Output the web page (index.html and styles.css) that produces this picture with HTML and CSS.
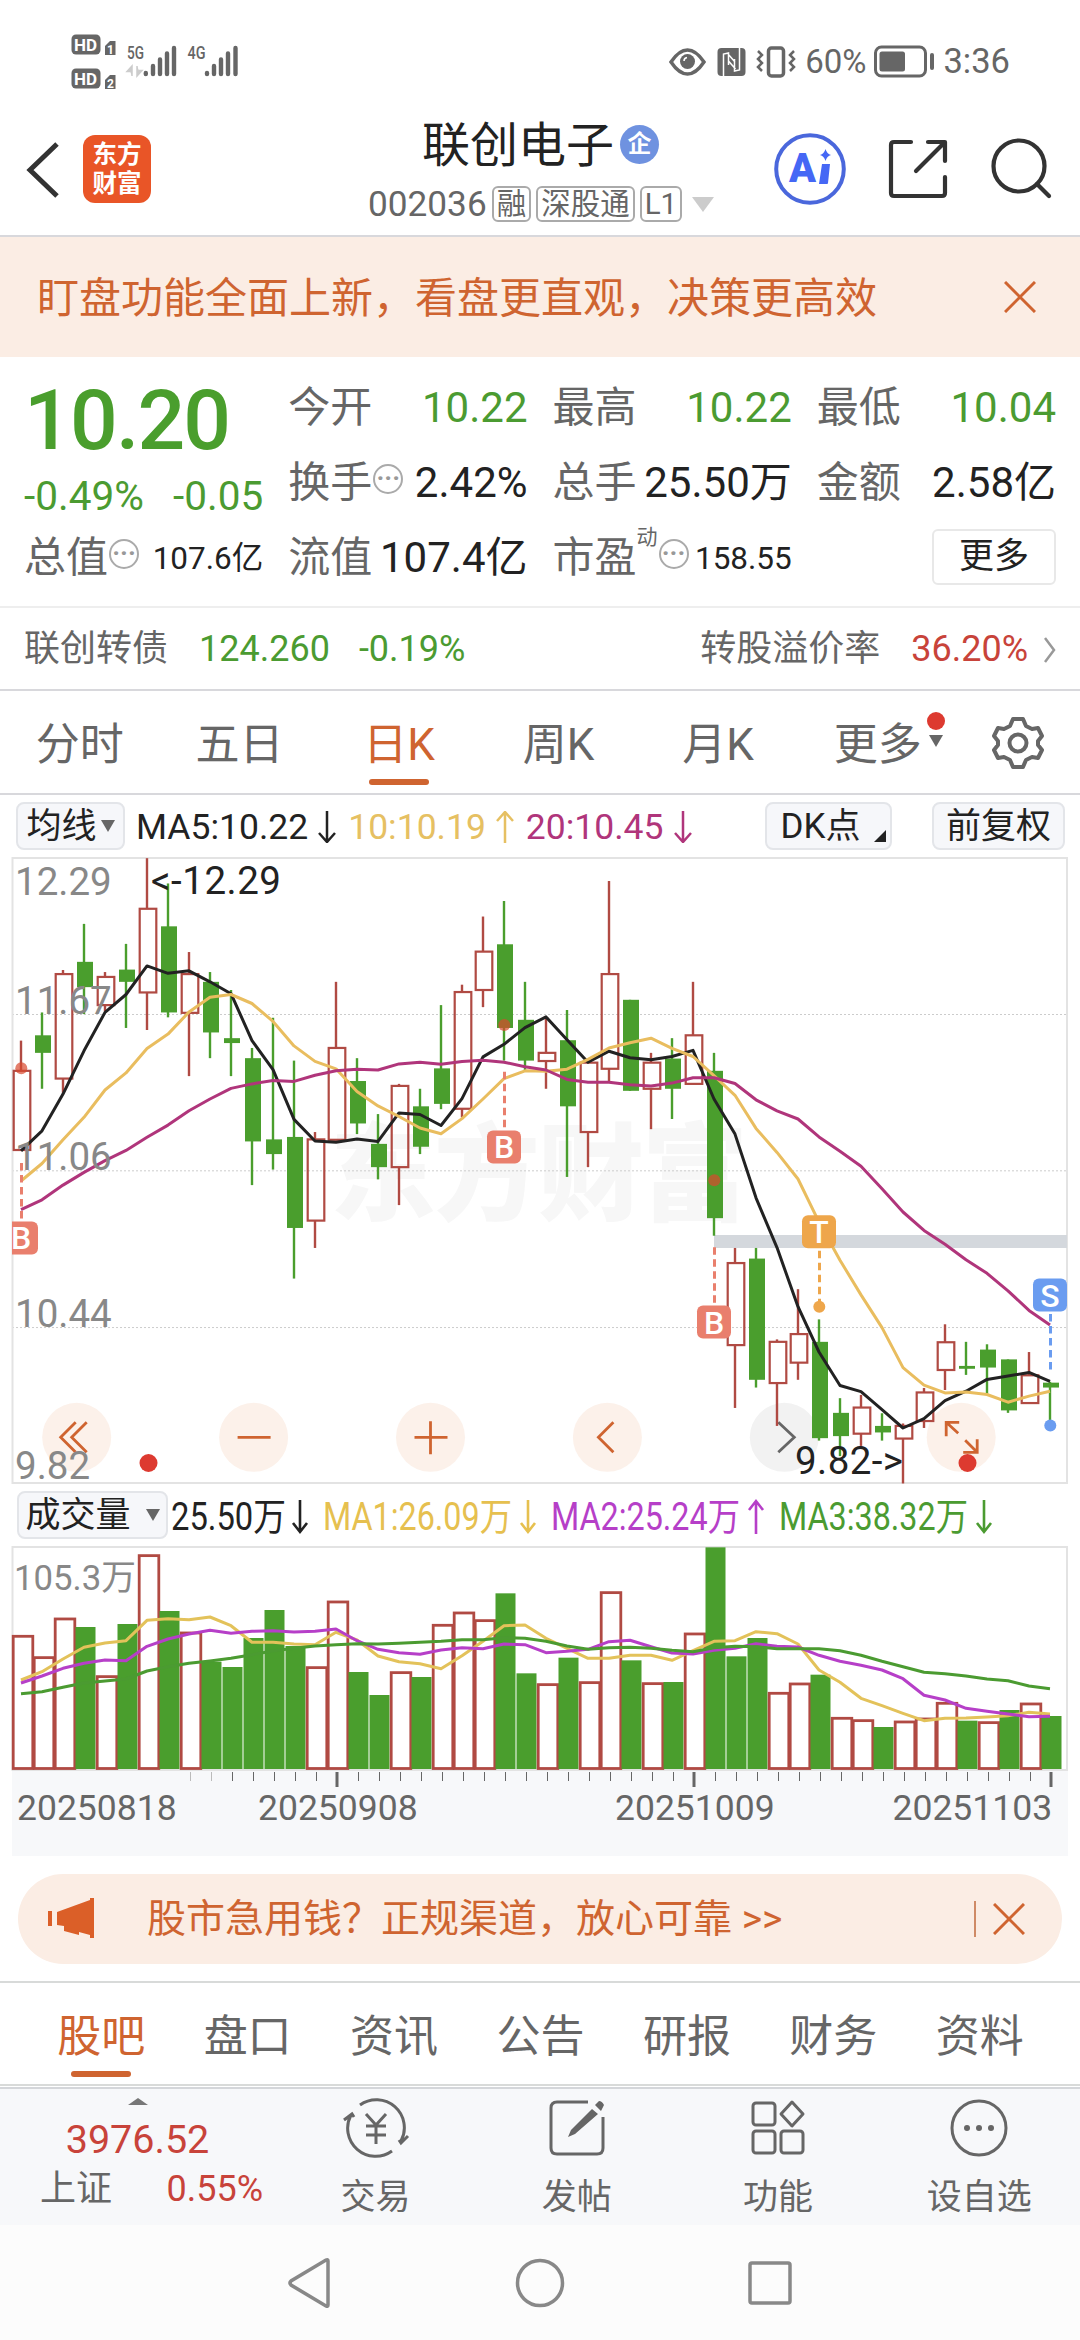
FILE: index.html
```html
<!DOCTYPE html>
<html lang="zh-CN">
<head>
<meta charset="utf-8">
<title>联创电子 002036</title>
<link rel="stylesheet" href="styles.css">
</head>
<body>

<div id="status">
	<svg class="left" width="200" height="60" viewBox="60 30 200 60">
		<g fill="#666">
			<rect x="71.500" y="34.500" width="29" height="20" rx="4.500"/>
			<path d="M105 46l5-5h5.500v14H105z"/>
			<rect x="71.500" y="68.500" width="29" height="20" rx="4.500"/>
			<path d="M105 80l5-5h5.500v14H105z"/>
		</g>
		<g stroke="#666" stroke-width="4.400" stroke-linecap="round">
			<path d="M145.800 73v1M153 66v8M160 59.500V74M167 53.500V74M174 48V74"/>
			<path d="M207 73v1M214 66v8M221 59.500V74M228 53.500V74M235.500 48V74"/>
		</g>
		<path d="M132 76V66l-5 5.500h3M137 66v10l5-5.500h-3" fill="#ccc" stroke="#ccc" stroke-width="1.500"/>
		<g class="hd">
			<text x="74" y="51">HD</text><text x="107" y="53.500" class="sub">1</text>
			<text x="74" y="85">HD</text><text x="107" y="87.500" class="sub">2</text>
		</g>
		<g class="net"><text x="127" y="59" textLength="17" lengthAdjust="spacingAndGlyphs">5G</text><text x="187.500" y="59" textLength="18" lengthAdjust="spacingAndGlyphs">4G</text></g>
	</svg>
	<div class="right">
		<svg width="136" height="40" viewBox="664 41 136 40" fill="none" stroke="#666">
			<path d="M671 61q8-12 16.500-12T704 61q-8 12-16.500 12T671 61z" stroke-width="3.500"/>
			<circle cx="687.500" cy="60.500" r="7.500" fill="#666" stroke="none"/>
			<path d="M684 60q0-3 3-3.500" stroke="#fff" stroke-width="1.500"/>
			<rect x="717.500" y="47" width="28" height="28" rx="4" fill="#666" stroke="none"/>
			<path d="M723.500 76V53l5-1v12M728 53l7 8M739.500 46v23l-5 1V58M735.500 68l-7-8" stroke="#fff" stroke-width="1.500"/>
			<rect x="768.500" y="47" width="15" height="28" rx="3" stroke-width="3.500"/>
			<path d="M758 50l4 4-4 4 4 4-4 4 4 4M794 50l-4 4 4 4-4 4 4 4-4 4" stroke-width="2.500"/>
		</svg>
		<span>60%</span>
		<svg width="62" height="34" viewBox="873 45 62 34">
			<rect x="875.500" y="47" width="50" height="29" rx="6" fill="none" stroke="#666" stroke-width="3"/>
			<rect x="879.500" y="51.500" width="25.500" height="20" rx="2.500" fill="#666"/>
			<rect x="930" y="53" width="4" height="17" rx="2" fill="#666"/>
		</svg>
		<span class="time">3:36</span>
	</div>
</div>

<div id="header">
	<svg class="back" width="36" height="60" viewBox="0 0 36 60" fill="none" stroke="#333" stroke-width="5"><path d="M32 4L5 30l27 26"/></svg>
	<div class="logo">东方<br>财富</div>
	<div class="title">
		<div class="name">联创电子<span class="qi">企</span></div>
		<div class="code">002036<span class="tag">融</span><span class="tag">深股通</span><span class="tag">L1</span><i></i></div>
	</div>
	<div class="tools">
		<svg width="74" height="74" viewBox="-37 -37 74 74">
			<circle r="33.800" fill="none" stroke="#4a67dc" stroke-width="4"/>
			<g class="ai"><text x="-21" y="13" textLength="27" lengthAdjust="spacingAndGlyphs">A</text><path d="M12-5h8l-2 19q0 1-1 1H9z" stroke-linejoin="round"/><path d="M15.500-20q1.500 5 5.500 6-4 1-5.500 6-1.500-5-5.500-6 4-1 5.500-6z"/></g>
		</svg>
		<svg width="62" height="62" viewBox="0 0 62 62" fill="none" stroke="#333" stroke-width="4.200" stroke-linecap="round" stroke-linejoin="round">
			<path d="M24 4H7q-3 0-3 3v48q0 3 3 3h48q3 0 3-3V39M41 4h17v19M56 6L29 33"/>
		</svg>
		<svg width="62" height="62" viewBox="0 0 62 62" fill="none" stroke="#333" stroke-width="4.200" stroke-linecap="round">
			<circle cx="29" cy="28" r="25.500"/><path d="M47 46l12 12"/>
		</svg>
	</div>
</div>

<div id="notice">
	<span>盯盘功能全面上新，看盘更直观，决策更高效</span>
	<svg class="close" width="32" height="32" viewBox="0 0 32 32"><path d="M1 1l30 30M31 1L1 31"/></svg>
</div>

<div id="quote">
	<div class="price">
		<b>10.20</b>
		<div><span>-0.49%</span><span>-0.05</span></div>
	</div>
	<div class="cell"><label>今开</label><em class="green">10.22</em></div>
	<div class="cell"><label>最高</label><em class="green">10.22</em></div>
	<div class="cell"><label>最低</label><em class="green">10.04</em></div>
	<div class="cell"><label>换手<i class="dots">···</i></label><em>2.42%</em></div>
	<div class="cell"><label>总手</label><em>25.50万</em></div>
	<div class="cell"><label>金额</label><em>2.58亿</em></div>
	<div class="cell"><label>总值<i class="dots">···</i></label><em class="small">107.6亿</em></div>
	<div class="cell"><label>流值</label><em>107.4亿</em></div>
	<div class="cell"><label>市盈<sup>动</sup><i class="dots">···</i></label><em class="small">158.55</em></div>
	<div class="cell"><button>更多</button></div>
</div>

<div id="bond">
	<span>联创转债</span><span class="green v1">124.260</span><span class="green v2">-0.19%</span>
	<span class="rate">转股溢价率</span><span class="red v3">36.20%</span>
	<svg width="12" height="26" viewBox="0 0 12 26" fill="none" stroke="#999" stroke-width="2.500"><path d="M1 1l9 12-9 12"/></svg>
</div>

<div id="period">
	<span>分时</span>
	<span>五日</span>
	<span class="on">日K</span>
	<span>周K</span>
	<span>月K</span>
	<span class="more">更多<i></i></span>
	<svg width="54" height="54" viewBox="-27 -27 54 54" fill="none" stroke="#666" stroke-width="4" stroke-linejoin="round">
		<path d="M-5-24H5L8-17 14-14 20-15 24-7 20-2V2L24 7 20 15 14 14 8 17 5 24H-5L-8 17-14 14-20 15-24 7-20 2V-2L-24-7-20-15-14-14-8-17z"/>
		<circle r="8.500"/>
	</svg>
</div>

<div id="ma">
	<span class="btn avg">均线<i class="down"></i></span>
	<span class="m5">MA5:10.22</span><svg class="arr" viewBox="0 0 18 32"><path d="M9 0v31M1 22l8 9 8-9"/></svg>
	<span class="m10">10:10.19</span><svg class="arr m10" viewBox="0 0 18 32"><path d="M9 32V1M1 10l8-9 8 9"/></svg>
	<span class="m20">20:10.45</span><svg class="arr m20" viewBox="0 0 18 32"><path d="M9 0v31M1 22l8 9 8-9"/></svg>
	<span class="btn dk">DK点<i></i></span>
	<span class="btn fq">前复权</span>
</div>

<svg id="kline" width="1080" height="627" viewBox="0 7 1080 627"></svg>

<div id="vma">
	<span class="btn">成交量<i class="down"></i></span>
	<svg width="860" height="60" viewBox="170 1485 860 60">
		<g class="vtext">
			<text x="171" y="1529.500" textLength="115" lengthAdjust="spacingAndGlyphs" fill="#222">25.50万</text>
			<text x="323" y="1529.500" textLength="189" lengthAdjust="spacingAndGlyphs" fill="#e6c04f">MA1:26.09万</text>
			<text x="551" y="1529.500" textLength="189" lengthAdjust="spacingAndGlyphs" fill="#b63fc8">MA2:25.24万</text>
			<text x="779" y="1529.500" textLength="189" lengthAdjust="spacingAndGlyphs" fill="#4b9b31">MA3:38.32万</text>
		</g>
		<g fill="none" stroke-width="2.600">
			<path d="M300 1500v32M293 1523l7 9 7-9" stroke="#222"/>
			<path d="M528 1500v32M521 1523l7 9 7-9" stroke="#e6c04f"/>
			<path d="M756 1534v-32M749 1510l7-9 7 9" stroke="#b63fc8"/>
			<path d="M984 1500v32M977 1523l7 9 7-9" stroke="#4b9b31"/>
		</g>
	</svg>
</div>

<svg id="volume" width="1080" height="310" viewBox="0 66 1080 310"></svg>

<div id="ad">
	<svg width="48" height="42" viewBox="0 0 48 42" fill="#db5f28"><rect x="0" y="13" width="4" height="15"/><path d="M9 14L42 2V0h4v40h-4v-3l-11-3v3l-15-4v-5l-7-1z"/></svg>
	<span>股市急用钱？正规渠道，放心可靠 &gt;&gt;</span>
	<i></i>
	<svg class="close" width="32" height="32" viewBox="0 0 32 32"><path d="M1 1l30 30M31 1L1 31"/></svg>
</div>

<div id="tabs">
	<span class="on">股吧</span>
	<span>盘口</span>
	<span>资讯</span>
	<span>公告</span>
	<span>研报</span>
	<span>财务</span>
	<span>资料</span>
</div>

<div id="bottom">
	<div class="index">
		<i></i>
		<b>3976.52</b>
		<div><span>上证</span><span class="red">0.55%</span></div>
	</div>
	<div class="item">
		<svg width="68" height="60" viewBox="-34 -30 68 60">
			<path d="M-16-23A28 28 0 0 1 25 13M16 23A28 28 0 0 1-25-13M-32-8l8-6 2 3M32 8l-7 7-2-3"/>
			<path d="M-10-14L0-3l10-11M0-3v19M-10-2h20M-10 7h20"/>
		</svg>
		<span>交易</span>
	</div>
	<div class="item">
		<svg width="60" height="60" viewBox="-30 -30 60 60">
			<path d="M11-26h-31q-6 0-6 6v40q0 6 6 6h40q6 0 6-6v-31"/>
			<path d="M15-19l6 5L-2 6-9 9l3-7zM18-23l4-4q3 0 5 4l-3 6z" fill="#666" stroke="none"/>
		</svg>
		<span>发帖</span>
	</div>
	<div class="item">
		<svg width="60" height="60" viewBox="-30 -30 60 60">
			<rect x="-25" y="-25" width="22" height="22" rx="3"/><path d="M14-26l11 12-11 12L3-14z" stroke-linejoin="round"/>
			<rect x="-25" y="3" width="22" height="22" rx="3"/><rect x="3" y="3" width="22" height="22" rx="3"/>
		</svg>
		<span>功能</span>
	</div>
	<div class="item">
		<svg width="60" height="60" viewBox="-30 -30 60 60">
			<circle r="27"/>
			<g fill="#666" stroke="none"><circle cx="-12" r="3"/><circle r="3"/><circle cx="12" r="3"/></g>
		</svg>
		<span>设自选</span>
	</div>
</div>

<div id="nav">
	<svg width="46" height="52" viewBox="0 0 46 52"><path d="M41 4v44q0 2-2 1L4 28q-2-2 0-4L39 3q2-1 2 1z"/></svg>
	<svg width="52" height="52" viewBox="0 0 52 52"><circle cx="26" cy="26" r="22.500"/></svg>
	<svg width="48" height="48" viewBox="0 0 48 48"><rect x="4" y="4" width="40" height="40" rx="2"/></svg>
</div>

<script src="chart.js"></script>
</body>
</html>
```
FILE: styles.css
```css
* {
	box-sizing: border-box;
}
body {
	margin: 0;
	width: 1080px;
	background: #fff;
	color: #222;
	font-family: Roboto, "Noto Sans CJK SC", sans-serif;
	font-size: 35px;
	line-height: 1.2;
}
svg {
	display: block;
	flex: none;
}
span, label, em, b {
	white-space: nowrap;
}
i, em {
	font-style: normal;
}
.green {color: #4b9b31 !important;}
.red {color: #c8433a;}

/* 状态栏 */
#status {
	height: 124px;
	padding: 30px 70px 0 60px;
	display: flex;
	justify-content: space-between;
}
#status .hd text {
	font-size: 17px;
	font-weight: bold;
	fill: #fff;
}
#status .hd .sub {font-size: 12px;}
#status .net text {
	font-size: 19px;
	font-weight: 500;
	fill: #666;
}
#status .right {
	display: flex;
	align-items: center;
	height: 64px;
	color: #666;
	font-size: 33px;
}
#status .right span {margin: 0 7px 0 5px;}
#status .right .time {
	margin: 0 0 0 8px;
	font-size: 34.500px;
}

/* 标题 */
#header {
	position: relative;
	height: 113px;
	border-bottom: 2px solid #d8d8dc;
	display: flex;
}
#header .back {margin: 16px 0 0 25px;}
.logo {
	width: 68px;
	height: 68px;
	margin: 11px 0 0 22px;
	padding-top: 5px;
	border-radius: 12px;
	background: #e95527;
	color: #fff;
	font-size: 24.500px;
	font-weight: bold;
	line-height: 29px;
	text-align: center;
}
.title {
	margin-left: 217px;
}
.name {
	margin: -3px 0 0 54px;
	height: 50px;
	display: flex;
	align-items: center;
	font-size: 48px;
}
.qi {
	width: 39px;
	height: 39px;
	margin: -3px 0 0 6px;
	border-radius: 50%;
	background: #6f92e0;
	color: #fff;
	font-size: 24px;
	font-weight: bold;
	line-height: 38px;
	text-align: center;
}
.code {
	display: flex;
	align-items: center;
	height: 36px;
	margin-top: 15px;
	color: #666;
	font-size: 35.200px;
}
.tag {
	height: 36px;
	margin-left: 5px;
	padding: 0 3px;
	border: 2px solid #aaa;
	border-radius: 6px;
	font-size: 29.500px;
	line-height: 32px;
}
.code i {
	margin-left: 10px;
	border: 11px solid transparent;
	border-top: 15px solid #ccc;
	border-bottom: 0;
}
.tools {
	margin-left: auto;
	padding: 8px 28px 0 0;
	display: flex;
	align-items: center;
	height: 82px;
	gap: 41px;
}
.tools svg:first-child {margin-right: -1px;}
.ai {fill: #4567f5;}
.ai text {
	font-size: 41px;
	font-weight: 900;
}

#notice {
	height: 120px;
	padding: 4px 44px 0 37px;
	display: flex;
	align-items: center;
	justify-content: space-between;
	background: #fbede4;
	color: #cf6430;
	font-size: 42px;
}
#notice svg {margin-top: -4px;}
.close path {
	stroke: #cf6430;
	stroke-width: 3;
}

/* 行情 */
#quote {
	height: 251px;
	padding: 14px 24px 0;
	display: grid;
	grid-template-columns: repeat(4, 1fr);
	grid-template-rows: repeat(3, 75px);
	column-gap: 25px;
	border-bottom: 2px solid #eee;
}
.price {
	grid-row: 1 / 3;
	color: #4b9b31;
	font-size: 40.500px;
}
.price b {
	display: block;
	height: 98px;
	color: #4a9e2d;
	font-size: 84px;
	font-weight: 500;
	letter-spacing: -1.800px;
	line-height: 99px;
}
.price div {
	display: flex;
	justify-content: space-between;
	line-height: 54px;
}
.cell {
	display: flex;
	align-items: center;
	justify-content: space-between;
	font-size: 42px;
}
.cell label {
	display: flex;
	align-items: center;
	color: #666;
}
.cell .small {font-size: 31.500px;}
.cell sup {
	align-self: flex-start;
	margin-top: -8px;
	font-size: 21px;
	line-height: 24px;
}
.dots {
	width: 30px;
	height: 30px;
	margin: -8px 0 0 1px;
	border: 2px solid #aaa;
	border-radius: 50%;
	color: #999;
	font-size: 26px;
	font-weight: bold;
	line-height: 25px;
	text-align: center;
}
button {
	width: 124px;
	height: 56px;
	margin: -4px 0 0 auto;
	border: 2px solid #e8e8e8;
	border-radius: 6px;
	background: #fff;
	color: #222;
	font: inherit;
	font-size: 35px;
	line-height: 52px;
	padding: 0;
}

#bond {
	height: 83px;
	padding: 2px 24px 0;
	display: flex;
	align-items: center;
	border-bottom: 2px solid #d8d8dc;
	color: #666;
	font-size: 36px;
}
#bond .v1 {margin-left: 31px;}
#bond .v2 {margin-left: 29px;}
#bond .rate {margin-left: auto;}
#bond .v3 {margin: 0 16px 0 31px;}

/* 周期 */
#period {
	height: 104px;
	padding-top: 7px;
	display: grid;
	grid-template-columns: repeat(6, 159.600px) 1fr;
	align-items: center;
	border-bottom: 2px solid #d8d8dc;
	color: #666;
	font-size: 44px;
	text-align: center;
}
#period svg {margin: -6px 0 0 33px;}
.on {
	position: relative;
	color: #cf6430;
}
.on::after {
	content: "";
	position: absolute;
	left: 50%;
	bottom: -13px;
	width: 60px;
	height: 6px;
	margin-left: -30px;
	border-radius: 3px;
	background: #cf6430;
}
.more {position: relative;}
.more::after {
	content: "";
	position: absolute;
	left: 129px;
	top: -7px;
	width: 18px;
	height: 18px;
	border-radius: 50%;
	background: #dd3a30;
}
.more i {
	position: absolute;
	left: 131px;
	top: 16px;
	border: 7px solid transparent;
	border-top: 12px solid #666;
	border-bottom: 0;
}

/* 均线 */
#ma {
	height: 62px;
	padding: 0 15px 0 16px;
	display: flex;
	align-items: center;
}
.btn {
	display: flex;
	align-items: center;
	justify-content: center;
	height: 48px;
	padding-top: 2px;
	border: 2px solid #e3e5e9;
	border-radius: 8px;
	background: #f6f7fa;
}
.down {
	margin: -2px 0 0 6px;
	border: 7.500px solid transparent;
	border-top: 12px solid #666;
	border-bottom: 0;
}
.avg {width: 109px;}
.avg .down {margin-left: 4px;}
span.m5, span.m10, span.m20 {
	padding-top: 2px;
	font-size: 35.500px;
}
.m5 {margin-left: 11px;}
.arr {
	width: 18px;
	height: 32px;
	margin: 2px 12px 0 10px;
	fill: none;
	stroke: #222;
	stroke-width: 2.500;
}
.m10 {color: #e6c062; stroke: #e6c062;}
.m20 {color: #b0357b; stroke: #b0357b;}
span.m10, span.m20 {stroke: none;}
.dk {
	position: relative;
	width: 127px;
	margin-left: auto;
	padding-right: 16px;
}
.dk i {
	position: absolute;
	right: 4px;
	bottom: 6px;
	border-left: 12px solid transparent;
	border-bottom: 12px solid #222;
}
.fq {
	width: 133px;
	margin-left: 40px;
}

/* 图表文字 */
#kline {font-size: 38.500px;}
.wm {
	font-size: 106px;
	font-weight: 900;
	fill: #f7f7f7;
}
.mark {
	font-size: 32px;
	font-weight: 500;
	fill: #fff;
	text-anchor: middle;
}
#vma {
	height: 62px;
	padding-left: 17px;
	display: flex;
	align-items: center;
}
#vma .btn {
	width: 151px;
	margin-right: 2px;
}
#vma .down {margin-left: 15px;}
.vtext {font-size: 38px;}
#volume {
	font-size: 35.500px;
}

/* 广告条 */
#ad {
	height: 90px;
	margin: 18px 18px 17px;
	padding: 0 37px 0 30px;
	display: flex;
	align-items: center;
	border-radius: 45px;
	background: #fbede4;
	color: #cf6430;
	font-size: 39px;
}
#ad span {margin-left: 51px;}
#ad i {
	width: 2px;
	height: 36px;
	margin: 0 17px 0 auto;
	background: #cf8a66;
}

#tabs {
	height: 105px;
	padding: 8px 27px 0 28px;
	display: grid;
	grid-template-columns: repeat(7, 1fr);
	align-items: center;
	border-top: 2px solid #d8dad9;
	border-bottom: 2px solid #d8dad9;
	color: #666;
	font-size: 44px;
	text-align: center;
}

/* 底部 */
#bottom {
	height: 138px;
	margin-top: 1px;
	display: grid;
	grid-template-columns: 275px repeat(4, 201.250px);
	border-top: 2px solid #d4d6da;
	background: #f7f8fa;
	color: #666;
}
.index {
	text-align: center;
	padding-top: 9px;
}
.index i {
	display: block;
	width: 20px;
	margin: 0 auto;
	border: 10px solid transparent;
	border-top: 0;
	border-bottom: 7px solid #777;
}
.index b {
	display: block;
	margin-top: 12px;
	color: #c8433a;
	font-size: 39.500px;
	font-weight: normal;
	line-height: 46px;
}
.index div {
	display: flex;
	justify-content: space-between;
	padding: 0 12px 0 40px;
	margin-top: 4px;
	font-size: 36px;
	line-height: 44px;
}
.item {
	display: flex;
	flex-direction: column;
	align-items: center;
	padding-top: 9px;
	line-height: 42px;
}
.item svg {
	margin-bottom: 19px;
	fill: none;
	stroke: #666;
	stroke-width: 3;
}
#nav {
	height: 115px;
	display: grid;
	grid-template-columns: repeat(3, 230px);
	justify-content: center;
	justify-items: center;
	align-items: center;
	background: #fcfcfc;
}
#nav svg {
	fill: none;
	stroke: #888;
	stroke-width: 3.500;
}
```
FILE: chart.js
```js
//// 日K: [涨r/跌g, 最高, 实体上, 实体下, 最低], 从上往下量
var candles = [
	['r',467,541,735,735],['g',398,454,497,585],['r',294,304,560,595],['g',181,274,336,402],['r',299,311,380,395],
	['g',230,293,323,436],['r',20,144,349,441],['g',82,187,398,410],['r',250,304,399,554],['g',299,323,447,510],
	['g',343,461,473,554],['g',485,510,714,821],['g',411,709,745,783],['g',516,703,926,1050],['r',691,709,908,975],
	['r',323,485,710,710],['g',510,566,670,696],['g',647,720,777,807],['r',573,578,777,870],['g',585,628,727,745],
	['g',380,535,622,635],['r',330,348,634,655],['r',163,249,343,385],['g',125,231,436,516],['g',323,416,516,540],
	['r',411,497,517,585],['g',392,466,628,801],['r',515,521,691,777],['r',76,304,536,570],['g',367,367,590,590],
	['r',497,521,585,684],['g',461,511,585,659],['r',323,454,573,573],['g',497,541,902,945],['r',975,1012,1213,1367],
	['g',975,1001,1298,1317],['r',1199,1205,1306,1411],['r',1076,1186,1256,1298],['g',1150,1205,1441,1447],['g',1343,1379,1436,1485],
	['r',1335,1366,1430,1460],['g',1380,1411,1427,1447],['r',1405,1411,1442,1552],['r',1318,1329,1399,1416],['r',1162,1206,1274,1323],
	['g',1205,1264,1271,1286],['g',1211,1224,1268,1335],['g',1248,1248,1373,1379],['r',1230,1287,1355,1355],['g',1303,1305,1317,1410]
];
var ma5 = [737,688,598,492,398,354,284,302,296,323,352,467,538,660,713,716,708,714,644,648,675,609,507,476,435,409,465,520,493,509,514,506,491,610,696,852,974,1119,1230,1312,1327,1371,1416,1393,1349,1326,1297,1289,1280,1302];
var ma10 = [811,768,710,655,588,546,486,451,397,361,354,376,420,480,518,536,592,627,653,681,695,658,610,560,541,542,537,513,485,472,461,486,506,553,601,682,741,806,912,1005,1090,1170,1268,1311,1330,1328,1334,1353,1338,1326];
var ma20 = [881,857,821,790,761,736,704,674,639,610,584,573,565,567,552,541,537,539,524,520,525,518,515,520,531,539,562,569,569,575,578,571,558,558,572,612,639,659,703,738,775,830,887,932,966,1004,1037,1080,1128,1164];

//// 成交量
var vols = 'r465 r529 r413 g441 r586 g432 r223 g393 r455 g545 g561 g474 g390 g498 r559 r362 g576 g645 r574 g591 r432 r395 r418 g340 g580 r610 g533 r604 r334 g541 r607 g606 r458 g202 g529 g474 r636 r608 g584 r711 r718 g741 r722 r713 r666 g722 r724 g690 r668 g708'.split(' ');
var vma1 = [600,575,537,502,489,482,421,416,419,411,437,487,487,492,494,457,480,528,545,551,566,527,484,437,435,475,505,535,535,526,526,541,512,484,482,455,461,492,570,607,655,677,700,722,715,714,711,707,697,702];
var vma2 = [609,588,565,550,540,542,499,477,462,451,460,454,452,456,454,447,482,508,518,523,510,503,506,492,494,518,514,508,485,481,500,519,522,511,505,491,499,501,526,544,556,570,596,646,660,685,694,702,710,709];
var vma3 = [641,635,622,609,603,597,573,560,550,543,535,524,513,505,498,494,491,492,490,487,484,479,479,473,475,484,498,508,503,502,505,511,515,503,499,500,506,506,506,512,526,544,560,577,581,588,597,602,618,626];

var RED = '#b04a43', GREEN = '#4a9e2d';

function cx( i ){ return 21 + i * 21; }
function line( data, k, color ){
	var pts = data.map(function( v, i ){ return cx(i) + ',' + (v/k).toFixed(1); }).join(' ');
	return '<polyline points="' + pts + '" fill="none" stroke="' + color + '" stroke-width="3" stroke-linejoin="round"/>';
}
function seg( x1, y1, x2, y2, color, w, more ){
	return '<line x1="' + x1 + '" y1="' + y1 + '" x2="' + x2 + '" y2="' + y2 + '" stroke="' + color + '" stroke-width="' + w + '" ' + (more || '') + '/>';
}
function box( x, y, w, h, attr ){
	return '<rect x="' + x + '" y="' + y + '" width="' + w + '" height="' + h + '" ' + attr + '/>';
}
function text( x, y, s, attr ){
	return '<text x="' + x + '" y="' + y + '" ' + attr + '>' + s + '</text>';
}

function drawKline(){
	var k = 2.45;
	var s = '<clipPath id="area"><rect x="12" y="7" width="1056" height="627"/></clipPath>';
	s += text(330, 362, '东方财富', 'class="wm" textLength="418"');
	//// 网格
	[403, 786, 1170].forEach(function( y ){
		s += seg(12, y/k, 1067, y/k, '#ccc', 1, 'stroke-dasharray="2 2"');
	});
	s += box(12.5, 8, 1054.5, 625, 'fill="none" stroke="#e3e3e3" stroke-width="2"');
	//// 操作按钮
	var icons = ['M-1-15l-15 15 15 15M10-15L-5 0l15 15', 'M-16 0h33', 'M-16 0h33M0-16v33', 'M6-15L-9 0 6 15', 'M-6-15L10 0-6 15',
		'M-3-4L-15-15M-15-1v-14h13M4 3l12 12M16 2v13H2'];
	icons.forEach(function( d, i ){
		var x = 76.7 + i*176.9;
		s += '<circle cx="' + x + '" cy="587.3" r="34.500" fill="' + (i == 4 ? '#f2f2f2' : '#fcf1ea') + '"/>';
		s += '<path transform="translate(' + x + ' 587.3)" d="' + d + '" fill="none" stroke="' + (i == 4 ? '#666' : '#cf6430') + '" stroke-width="2.8"/>';
	});
	s += box(714, 385, 353, 13, 'fill="#d4d8dd"');
	//// 蜡烛
	candles.forEach(function( c, i ){
		var x = cx(i), hi = c[1]/k, top = c[2]/k, bot = c[3]/k, lo = c[4]/k;
		if( c[0] == 'g' ){
			s += seg(x, hi, x, lo, GREEN, 2.4) + box(x-7, top, 16, bot-top, 'fill="' + GREEN + '"');
		}else{
			s += seg(x, hi, x, top, RED, 2.4) + seg(x, bot, x, lo, RED, 2.4);
			s += box(x-7.3, top, 16.6, bot-top, 'fill="none" stroke="' + RED + '" stroke-width="2.2"');
		}
	});
	s += line(ma5, k, '#222') + line(ma10, k, '#e9bd5f') + line(ma20, k, '#b0357b');
	//// 买卖点 [序号, 字, 颜色, 框上沿, 线起, 线止, 圆点]
	[[0,'B','#e97f6d',910,767,905,535], [23,'B','#e97f6d',687,543,683,429], [33,'B','#e97f6d',1116,973,1112,809],
	 [38,'T','#eea64b',895,982,1112,1119], [49,'S','#6a9cf0',1050,1137,1274,1410]].forEach(function( m ){
		var x = cx(m[0]), y = m[3]/k;
		s += '<g clip-path="url(#area)">';
		s += seg(x+.5, m[4]/k, x+.5, m[5]/k, m[2], 3, 'stroke-dasharray="7.500 4.500"');
		s += '<circle cx="' + (x+.3) + '" cy="' + m[6]/k + '" r="6" fill="' + (m[1] == 'B' ? '#d9482e' : m[2]) + '" opacity="' + (m[1] == 'B' ? .7 : 1) + '"/>';
		s += box(x-17, y, 34, 33, 'rx="6" fill="' + m[2] + '"') + text(x, y+28, m[1], 'class="mark"') + '</g>';
	});
	//// 价格刻度
	[['12.29',45.2], ['11.67',163.7], ['11.06',320.3], ['10.44',477.3], ['9.82',629]].forEach(function( t ){
		s += text(15, t[1], t[0], 'fill="#888"');
	});
	s += text(151, 43.7, '&lt;-12.29', 'fill="#222" textLength="130"') + text(795, 624, '9.82-&gt;', 'fill="#222" textLength="108"');
	s += '<circle cx="148.500" cy="613" r="9" fill="#dd3a30"/><circle cx="967.500" cy="613" r="9" fill="#dd3a30"/>';
	document.getElementById('kline').innerHTML = s;
}

function drawVolume(){
	var k = 3, base = 289;
	var s = box(12, 291, 1056, 85, 'fill="#f7f8fa"');
	s += box(12.5, 67, 1054.5, 223, 'fill="none" stroke="#e3e3e3" stroke-width="2"');
	s += text(14, 110, '105.3万', 'fill="#888" textLength="122" lengthAdjust="spacingAndGlyphs"');
	vols.forEach(function( v, i ){
		var y = v.slice(1)/k, x = cx(i);
		if( v[0] == 'g' ) s += box(x-8.5, y, 20, base-y, 'fill="' + GREEN + '"');
		else s += box(x-7.8, y+1.3, 19.6, base-y-1.8, 'fill="#fff" stroke="' + RED + '" stroke-width="2.8"');
	});
	s += line(vma1, k, '#e3c25a') + line(vma2, k, '#b63fc8') + line(vma3, k, '#4b9b31');
	//// 时间刻度
	for( var i = 8; i < 50; i++ ){
		if( i == 15 || i == 32 || i == 49 ) s += seg(cx(i)+1, 292, cx(i)+1, 307, '#666', 3);
		else s += seg(cx(i)+1.5, 292, cx(i)+1.5, 301, i < 10 ? '#bbb' : '#666', 1);
	}
	[[17,'20250818'], [258,'20250908'], [615,'20251009'], [892.5,'20251103']].forEach(function( d ){
		s += text(d[0], 340, d[1], 'fill="#666"');
	});
	document.getElementById('volume').innerHTML = s;
}

drawKline();
drawVolume();
```
